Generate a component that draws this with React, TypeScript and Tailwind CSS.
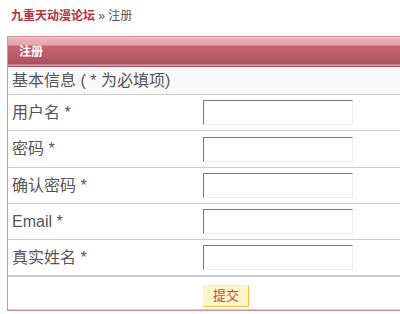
import React from "react";

const rows: { label: string; h: string }[] = [
  { label: "用户名 *", h: "h-[35px]" },
  { label: "密码 *", h: "h-[36px]" },
  { label: "确认密码 *", h: "h-[35px]" },
  { label: "Email *", h: "h-[35px]" },
  { label: "真实姓名 *", h: "h-[35px]" },
];

export default function App() {
  return (
    <div
      className="w-[400px] h-[314px] overflow-hidden bg-white"
      style={{ fontFamily: '"Liberation Sans", "Noto Sans CJK SC", sans-serif' }}
    >
      <div className="h-[36px] pt-[9px] pl-[11px] text-[12px] leading-[14px]">
        <span className="font-bold text-[#b8303e]">九重天动漫论坛</span>
        <span className="text-[#555]"> » 注册</span>
      </div>
      <div className="ml-[7px] w-[460px] border-l border-t border-b border-[#d98f9c]">
        <div className="h-[30px] flex items-center pl-[11px] text-[12px] font-bold text-white bg-[linear-gradient(to_bottom,#f0c6cd_0px,#e8b0b9_2px,#e3a6b0_8px,#c8636f_9px,#bc5d69_18px,#a9525e_27px,#d8a0a8_28px,#d8a0a8_29px,#96505e_29px)]">
          注册
        </div>
        <div className="h-[28px] flex items-center pl-[4px] bg-[#f9f9f9] border-b border-[#cccccc] text-[16px] text-[#555]">
          基本信息 ( * 为必填项)
        </div>
        {rows.map((r, i) => (
          <div
            key={r.label}
            className={`grid grid-cols-[191px_1fr] ${r.h} ${
              i === rows.length - 1 ? "border-b-2" : "border-b"
            } border-[#cccccc] box-content`}
          >
            <div className="flex items-center pl-[4px] text-[16px] text-[#555]">{r.label}</div>
            <div className="flex items-center pl-[4px]">
              <input
                type="text"
                className="w-[150px] h-[25px] border border-t-[#7a7a7a] border-l-[#7a7a7a] border-r-[#eeeeee] border-b-[#eeeeee] bg-white outline-none"
              />
            </div>
          </div>
        ))}
        <div className="h-[33px] grid grid-cols-[191px_1fr] border-b border-[#cccccc]">
          <div />
          <div className="pl-[4px] pt-[6px]">
            <button className="w-[46px] h-[22px] bg-[#fff6c8] border border-t-[#fff2b8] border-l-[#fff2b8] border-r-[#f5bf3c] border-b-[#f5bf3c] text-[13px] leading-[20px] text-[#c24a44]">
              提交
            </button>
          </div>
        </div>
      </div>
    </div>
  );
}
